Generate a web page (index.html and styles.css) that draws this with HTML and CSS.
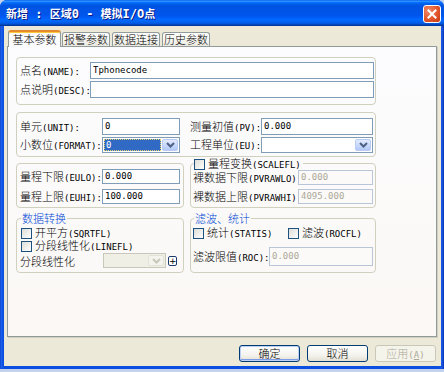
FILE: index.html
```html
<!DOCTYPE html>
<html>
<head>
<meta charset="utf-8">
<title>新增</title>
<link rel="stylesheet" href="styles.css">
</head>
<body>
<div class="window">
  <div class="titlebar">
    <span class="title">新增<span class="tm"> : </span>区域<span class="tm">0 - </span>模拟<span class="tm">I/O</span>点</span>
    <span class="close"><svg width="10" height="10" viewBox="0 0 10 10"><path d="M1.5 1.5 L8.5 8.5 M8.5 1.5 L1.5 8.5" stroke="#fff" stroke-width="2" stroke-linecap="square"/></svg></span>
  </div>
  <div class="client">
    <div class="tabs">
      <div class="tab active">基本参数</div>
      <div class="tab">报警参数</div>
      <div class="tab">数据连接</div>
      <div class="tab">历史参数</div>
    </div>
    <div class="panel">
      <div class="group g1">
        <div class="row"><span class="lbl l70">点名<span class="en">(NAME):</span></span><div class="tb grow">Tphonecode</div></div>
        <div class="row"><span class="lbl l70">点说明<span class="en">(DESC):</span></span><div class="tb grow"></div></div>
      </div>
      <div class="group g2">
        <span class="lbl">单元<span class="en">(UNIT):</span></span>
        <div class="tb">0</div>
        <span class="lbl c3">测量初值<span class="en">(PV):</span></span>
        <div class="tb">0.000</div>
        <span class="lbl">小数位<span class="en">(FORMAT):</span></span>
        <div class="cb"><div class="val"><span class="sel">0</span></div><span class="arrow"><svg width="9" height="6" viewBox="0 0 9 6"><path d="M1 1 L4.5 4.5 L8 1" fill="none" stroke="#4d6185" stroke-width="2"/></svg></span></div>
        <span class="lbl c3">工程单位<span class="en">(EU):</span></span>
        <div class="cb"><div class="val"></div><span class="arrow"><svg width="9" height="6" viewBox="0 0 9 6"><path d="M1 1 L4.5 4.5 L8 1" fill="none" stroke="#4d6185" stroke-width="2"/></svg></span></div>
      </div>
      <div class="pair">
        <div class="group g3">
          <div class="row"><span class="lbl l82">量程下限<span class="en">(EULO):</span></span><div class="tb w78">0.000</div></div>
          <div class="row"><span class="lbl l82">量程上限<span class="en">(EUHI):</span></span><div class="tb w78">100.000</div></div>
        </div>
        <fieldset class="group g4">
          <legend class="lg-check"><span class="chk"></span>量程变换<span class="en">(SCALEFL)</span></legend>
          <div class="row r1"><span class="lbl l105">裸数据下限<span class="en">(PVRAWLO):</span></span><div class="tb w75 dis">0.000</div></div>
          <div class="row r2"><span class="lbl l105">裸数据上限<span class="en">(PVRAWHI):</span></span><div class="tb w75 dis">4095.000</div></div>
        </fieldset>
      </div>
      <div class="pair pair2">
        <fieldset class="group g5">
          <legend class="lg">数据转换</legend>
          <div class="cbrow"><span class="chk"></span>开平方<span class="en">(SQRTFL)</span></div>
          <div class="cbrow"><span class="chk"></span>分段线性化<span class="en">(LINEFL)</span></div>
          <div class="row r3">
            <span class="lbl l83">分段线性化</span>
            <div class="cb dcb"><div class="val"></div><span class="arrow"><svg width="9" height="6" viewBox="0 0 9 6"><path d="M1 1 L4.5 4.5 L8 1" fill="none" stroke="#c9c7ba" stroke-width="2"/></svg></span></div>
            <span class="plus">+</span>
          </div>
        </fieldset>
        <fieldset class="group g6">
          <legend class="lg">滤波、统计</legend>
          <div class="row r4">
            <span class="cbitem w95"><span class="chk"></span>统计<span class="en">(STATIS)</span></span>
            <span class="cbitem"><span class="chk"></span>滤波<span class="en">(ROCFL)</span></span>
          </div>
          <div class="row r5"><span class="lbl l76">滤波限值<span class="en">(ROC):</span></span><div class="tb w104 dis">0.000</div></div>
        </fieldset>
      </div>
    </div>
    <div class="buttons">
      <div class="btn default">确定</div>
      <div class="btn">取消</div>
      <div class="btn disabled">应用<span class="en">(<u>A</u>)</span></div>
    </div>
  </div>
</div>
</body>
</html>
```
FILE: styles.css
```css
* { box-sizing: border-box; }
html, body { margin: 0; padding: 0; }
body {
  width: 444px;
  height: 372px;
  overflow: hidden;
  background: #c4d2ee;
  font-family: "Noto Sans CJK SC", "Noto Sans CJK JP", sans-serif;
  font-weight: 300;
  font-size: 11px;
  line-height: 12px;
  color: #000;
}
.en { font-family: "DejaVu Sans Mono", "Liberation Mono", monospace; font-size: 9px; font-weight: 400; }

.window {
  width: 444px;
  height: 369px;
  display: flex;
  flex-direction: column;
  background: linear-gradient(to right, #0a3bc4 0, #1f63ee 1px, #0b4fe0 3px, #0b4fe0 440px, #1a5ae8 442px, #0831b0 444px);
  border-radius: 7px 7px 0 0;
  overflow: hidden;
  padding-bottom: 3px;
}
.titlebar {
  height: 26px;
  flex: none;
  display: flex;
  align-items: center;
  justify-content: space-between;
  padding: 0 3px 0 6px;
  background: linear-gradient(to bottom, #0058ee 0%, #3593ff 4%, #288eff 6%, #127dff 8%, #036ffc 10%, #0262ee 14%, #0057e5 20%, #0054e3 24%, #0055eb 56%, #005bf5 66%, #026afe 76%, #0062ef 86%, #0052d6 92%, #0040ab 96%, #003092 100%);
}
.title {
  color: #fff;
  font-weight: bold;
  font-size: 11px;
  text-shadow: 1px 1px 0 #0a1883;
  white-space: pre;
}
.title .tm { font-family: "DejaVu Sans Mono", monospace; font-size: 12px; }
.close {
  width: 18px;
  height: 18px;
  border: 1px solid #fff;
  border-radius: 3px;
  background: radial-gradient(circle at 30% 30%, #f0896a 0, #e2562c 55%, #c23a12 100%);
  display: flex;
  align-items: center;
  justify-content: center;
  margin-top: 1px;
}

.client {
  flex: 1;
  margin: 0 3px 0 4px;
  background: #ece9d8;
  padding-left: 3px;
  display: flex;
  flex-direction: column;
}
.tabs {
  height: 20px;
  display: flex;
  align-items: flex-end;
  padding-left: 1px;
}
.tab {
  width: 48px;
  height: 14px;
  margin-right: 2px;
  border: 1px solid #919b9c;
  border-bottom: none;
  border-radius: 3px 3px 0 0;
  background: linear-gradient(#ffffff, #f3f2ec 70%, #e9e7dd);
  text-align: center;
  line-height: 13px;
  white-space: nowrap;
}
.tab.active {
  width: 53px;
  height: 17px;
  margin-right: 1px;
  margin-bottom: -1px;
  position: relative;
  z-index: 1;
  border-top: 2px solid #e68b2c;
  box-shadow: inset 0 1px 0 #ffc83c;
  background: #fcfcfe;
  line-height: 15px;
}

.panel {
  width: 430px;
  height: 291px;
  border: 1px solid #919b9c;
  background: linear-gradient(#fcfcfe, #fbf8f5);
  box-shadow: 1px 1px 0 #d0cebf;
  padding: 10px 0 0 8px;
}
.group {
  border: 1px solid #d0d0bf;
  border-radius: 4px;
  margin: 0;
  min-width: 0;
}
.row { display: flex; align-items: center; }
.lbl { white-space: nowrap; flex: none; }
.l70 { width: 70px; }
.l76 { width: 76px; }
.l82 { width: 82px; }
.l83 { width: 83px; }
.l105 { width: 105px; }

.tb {
  height: 17px;
  border: 1px solid #7f9db9;
  background: #fff;
  padding-left: 2px;
  font-family: "DejaVu Sans Mono", "Liberation Mono", monospace;
  font-weight: 400;
  font-size: 9px;
  line-height: 15px;
  white-space: nowrap;
  overflow: hidden;
  flex: none;
}
.tb.grow { flex: 1; }
.tb.dis { border-color: #b9c6d8; background: #fbfaf8; color: #aca899; }
.w75 { width: 75px; }
.w78 { width: 78px; }
.w104 { width: 104px; }

.g1 {
  width: 360px;
  height: 48px;
  padding: 4px 1px 0 3px;
  display: flex;
  flex-direction: column;
  gap: 2px;
}
.g2 {
  width: 360px;
  height: 45px;
  margin-top: 7px;
  padding: 5px 0 0 3px;
  display: grid;
  grid-template-columns: 82px 78px 81px 112px;
  grid-template-rows: 17px 16px;
  row-gap: 2px;
  align-items: center;
}
.g2 .c3 { padding-left: 10px; }
.g2 .tb { height: 17px; }

.cb {
  height: 16px;
  border: 1px solid #7f9db9;
  background: #fff;
  padding: 1px;
  display: flex;
  gap: 1px;
}
.cb .val { flex: 1; display: flex; align-items: center; }
.cb .sel {
  display: block;
  width: 100%;
  height: 100%;
  background: #316ac5;
  color: #fff;
  outline: 1px dotted #e8d56a;
  outline-offset: -1px;
  font-family: "DejaVu Sans Mono", monospace;
  font-weight: 400;
  font-size: 9px;
  line-height: 12px;
  padding-left: 2px;
}
.cb .arrow {
  width: 16px;
  flex: none;
  border: 1px solid #b7cbf6;
  border-radius: 2px;
  background: linear-gradient(#e3ebfd, #c5d6fb 60%, #b4c8f6);
  display: flex;
  align-items: center;
  justify-content: center;
}
.dcb { border-color: #c9c7ba; background: #f0efe6; width: 63px; height: 15px; }
.dcb .arrow { border-color: #e3e1d8; background: #f4f3ee; }
.plus {
  width: 9px;
  height: 10px;
  margin-left: 2px;
  border: 1px solid #1d3c6d;
  border-radius: 2px;
  background: #fff;
  font-family: "DejaVu Sans", sans-serif;
  font-weight: 400;
  font-size: 9px;
  line-height: 8px;
  text-align: center;
}

.pair { display: flex; gap: 6px; align-items: flex-end; }
.g3 {
  width: 168px;
  height: 45px;
  padding: 5px 0 0 3px;
  display: flex;
  flex-direction: column;
  gap: 5px;
}
.g3 .tb { height: 15px; line-height: 13px; }
.g4 {
  width: 186px;
  height: 51px;
  padding: 0 0 0 2px;
}
.g4 .tb { height: 15px; line-height: 13px; }
.g4 .r1 { margin-top: 1px; }
.g4 .r2 { margin-top: 4px; }

legend {
  padding: 0 1px;
  margin-left: 1px;
  line-height: 12px;
  height: 12px;
  white-space: nowrap;
}
.lg { color: #0046d5; }
.lg-check { padding: 0 2px 0 0; }

.chk {
  display: inline-block;
  width: 11px;
  height: 11px;
  border: 1px solid #1c5180;
  background: linear-gradient(135deg, #dcdcd7, #ffffff);
  margin-right: 3px;
  vertical-align: -2px;
}
.pair2 { margin-top: 4px; align-items: stretch; }
.g5 {
  width: 168px;
  height: 61px;
  padding: 2px 0 0 3px;
}
.cbrow { height: 13px; margin-left: 1px; white-space: nowrap; line-height: 12px; }
.r3 { height: 15px; margin-top: 1px; }
.g6 {
  width: 186px;
  height: 61px;
  padding: 2px 0 0 2px;
}
.r4 { height: 13px; line-height: 12px; }
.cbitem { white-space: nowrap; }
.w95 { width: 95px; flex: none; }
.r5 { margin-top: 8px; }
.r5 .tb { height: 19px; line-height: 17px; }

.buttons {
  width: 430px;
  display: flex;
  justify-content: flex-end;
  gap: 7px;
  padding-right: 1px;
  margin-top: 8px;
}
.btn {
  width: 61px;
  height: 17px;
  border: 1px solid #003c74;
  border-radius: 3px;
  background: linear-gradient(#ffffff, #f4f3ee 60%, #e3e0d3);
  text-align: center;
  line-height: 15px;
  white-space: nowrap;
}
.btn.default { box-shadow: inset 0 0 0 1px #bcd0f6, inset 0 -1px 0 1px #7d9be6; }
.btn.disabled { border-color: #c9c7ba; color: #aca899; background: #f5f4ea; }
```
